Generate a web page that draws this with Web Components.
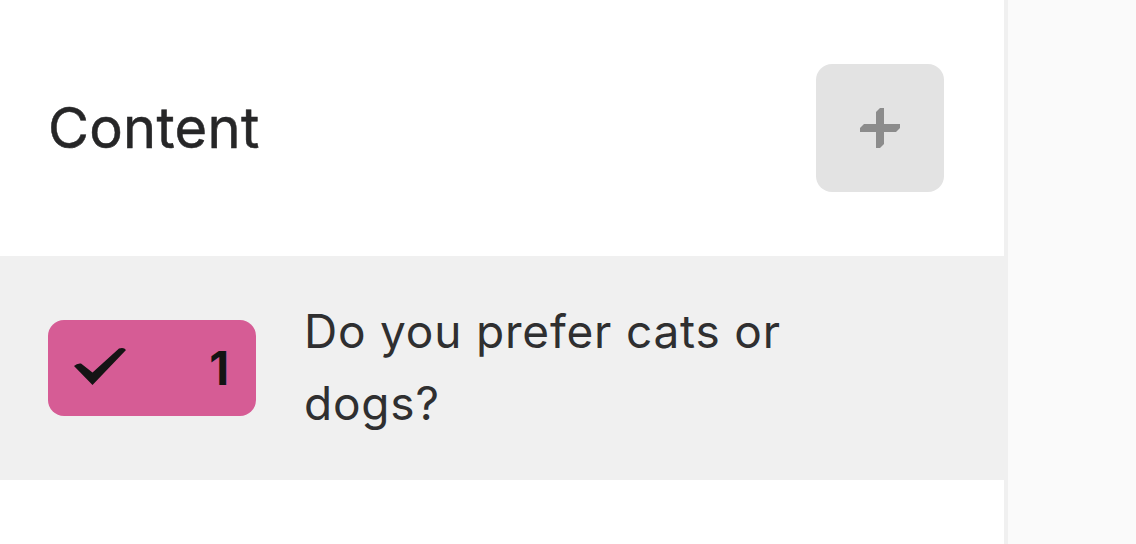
<!DOCTYPE html>
<html>
<head>
<meta charset="utf-8">
<style>
  html, body { margin: 0; height: 100%; background: #fafafa; }
  body { font-family: Inter, "Liberation Sans", sans-serif; overflow: hidden; }
</style>
</head>
<body>
<content-panel>
  <question-row number="1">Do you prefer cats or dogs?</question-row>
</content-panel>

<script>
class contentPanel extends HTMLElement {
  constructor() {
    super();
    this.shadowDOM = this.attachShadow({mode: 'open'});
    this.shadowDOM.innerHTML = `
      <style>
        * { margin: 0; padding: 0; box-sizing: border-box; }
        :host {
          display: block;
          width: 1008px;
          height: 544px;
          background: #fff;
          border-right: 4px solid #f0f0f0;
          box-sizing: border-box;
        }
        header {
          display: flex;
          align-items: center;
          justify-content: space-between;
          height: 256px;
          padding: 0 60px 0 48px;
        }
        h2 {
          font-size: 56px;
          font-weight: 400;
          letter-spacing: 0.3px;
          -webkit-text-stroke: 0.5px #262627;
          color: #262627;
        }
        .add {
          display: flex;
          align-items: center;
          justify-content: center;
          width: 128px;
          height: 128px;
          border-radius: 16px;
          background: #e3e3e3;
        }
      </style>
      <header>
        <h2>Content</h2>
        <div class="add">
          <svg width="40" height="40" viewBox="0 0 40 40"><path d="M16 4L20 0H24V16H40V20L36 24H24V36L20 40H16V24H0V20L4 16H16Z" fill="#8c8c8c"/></svg>
        </div>
      </header>
      <slot></slot>
    `;
  }
}

class questionRow extends HTMLElement {
  constructor() {
    super();
    this.shadowDOM = this.attachShadow({mode: 'open'});
    this.shadowDOM.innerHTML = `
      <style>
        * { margin: 0; padding: 0; box-sizing: border-box; }
        :host {
          display: flex;
          align-items: center;
          height: 224px;
          margin-right: -4px;
          padding-left: 48px;
          background: #f0f0f0;
        }
        .badge {
          display: flex;
          align-items: center;
          justify-content: space-between;
          flex: none;
          width: 208px;
          height: 96px;
          padding: 0 27px 0 26px;
          border-radius: 16px;
          background: #d65c95;
          color: #141414;
          font-size: 46px;
          font-weight: 700;
        }
        svg { margin-bottom: 3px; overflow: visible; }
        p {
          width: 500px;
          margin: 0 0 2px 48px;
          font-size: 46px;
          line-height: 72px;
          letter-spacing: 0.8px;
          color: #2f2f30;
        }
      </style>
      <div class="badge">
        <svg width="52" height="37" viewBox="0 0 52 37"><path d="M0 18Q3 15 7 15.5L18.5 24.5L45 0.5Q50 -1 52 2L18.5 37Z" fill="#141414"/></svg>
        <span>${this.getAttribute('number')}</span>
      </div>
      <p><slot></slot></p>
    `;
  }
}

customElements.define('content-panel', contentPanel);
customElements.define('question-row', questionRow);
</script>
</body>
</html>
